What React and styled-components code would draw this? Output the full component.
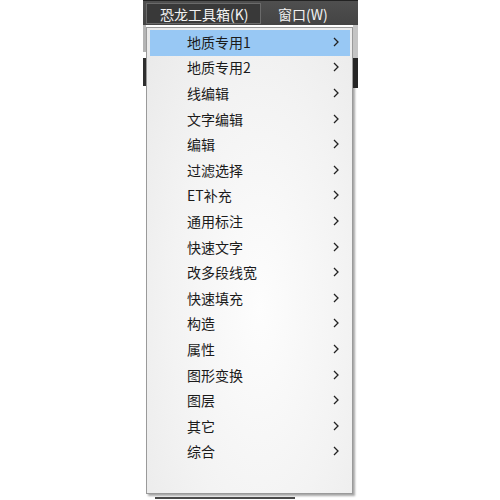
import React from "react";
import styled, { createGlobalStyle } from "styled-components";

const items = [
	"地质专用1",
	"地质专用2",
	"线编辑",
	"文字编辑",
	"编辑",
	"过滤选择",
	"ET补充",
	"通用标注",
	"快速文字",
	"改多段线宽",
	"快速填充",
	"构造",
	"属性",
	"图形变换",
	"图层",
	"其它",
	"综合",
];

export default function App() {
	return (
		<>
			<GlobalStyle />
			<Screen>
				<MenuBar>
					<BarItem $active>恐龙工具箱(K)</BarItem>
					<BarItem>窗口(W)</BarItem>
				</MenuBar>
				<Stage>
					<Edge>
						<EdgePart $h={27} $color="#b4b4b4" />
						<EdgePart $h={6} $color="transparent" />
						<EdgePart $h={28} $color="#2e2e2e" />
					</Edge>
					<Dropdown>
						{items.map((label, i) => (
							<Item key={label} $hover={i === 0}>
								<span>{label}</span>
								<Chevron viewBox="0 0 6 10" width="6" height="10">
									<polyline points="1,1 5,5 1,9" fill="none" stroke="#222" strokeWidth="1.3" />
								</Chevron>
							</Item>
						))}
					</Dropdown>
					<Edge $w={5}>
						<EdgePart $h={33} $color="#c4c4c4" />
						<EdgePart $h={30} $color="#262626" />
					</Edge>
				</Stage>
				<BottomLine />
			</Screen>
		</>
	);
}

const GlobalStyle = createGlobalStyle`
	body {
		margin: 0;
		background: #ffffff;
		font-family: "Noto Sans CJK SC", "Noto Sans", sans-serif;
	}
`;

const Screen = styled.div`
	margin-left: 143px;
	width: 215px;
	display: flex;
	flex-direction: column;
`;

const MenuBar = styled.div`
	height: 25px;
	box-sizing: border-box;
	display: flex;
	align-items: stretch;
	padding: 2px 2px 1px 3px;
	background: linear-gradient(#4f4f4f, #444444);
	border-top: 1px solid #222222;
`;

const BarItem = styled.div`
	display: flex;
	align-items: center;
	padding: 0 ${(p) => (p.$active ? "13px" : "16px")};
	width: ${(p) => (p.$active ? "115px" : "auto")};
	box-sizing: border-box;
	font-size: 14px;
	line-height: 1;
	color: #f2f2f2;
	background: ${(p) => (p.$active ? "#393939" : "transparent")};
	border: 1px solid ${(p) => (p.$active ? "#6a6a6a" : "transparent")};
	white-space: nowrap;
`;

const Stage = styled.div`
	display: flex;
	align-items: flex-start;
	background: #ffffff;
`;

const Edge = styled.div`
	width: ${(p) => p.$w || 3}px;
	display: flex;
	flex-direction: column;
`;

const EdgePart = styled.div`
	height: ${(p) => p.$h}px;
	background: ${(p) => p.$color};
`;

const Dropdown = styled.div`
	width: 207px;
	height: 467px;
	margin-top: 2px;
	box-sizing: border-box;
	padding: 2px 2px 0 3px;
	border: 1px solid #9a9a9a;
	background: radial-gradient(ellipse at 55% 60%, #fdfdfd 0%, #f3f3f3 55%, #e9e9e9 100%);
	box-shadow: 2px 2px 2px rgba(0, 0, 0, 0.35);
	display: flex;
	flex-direction: column;
`;

const Item = styled.div`
	height: 25.6px;
	flex: none;
	box-sizing: border-box;
	display: flex;
	align-items: center;
	justify-content: space-between;
	padding: 0 11px 2px 37px;
	font-size: 14px;
	line-height: 1;
	color: #1b1b1b;
	background: ${(p) => (p.$hover ? "#98c8f4" : "transparent")};
`;

const Chevron = styled.svg`
	display: block;
`;

const BottomLine = styled.div`
	margin: 3px 0 0 12px;
	width: 140px;
	height: 2px;
	background: #4a4a4a;
`;
